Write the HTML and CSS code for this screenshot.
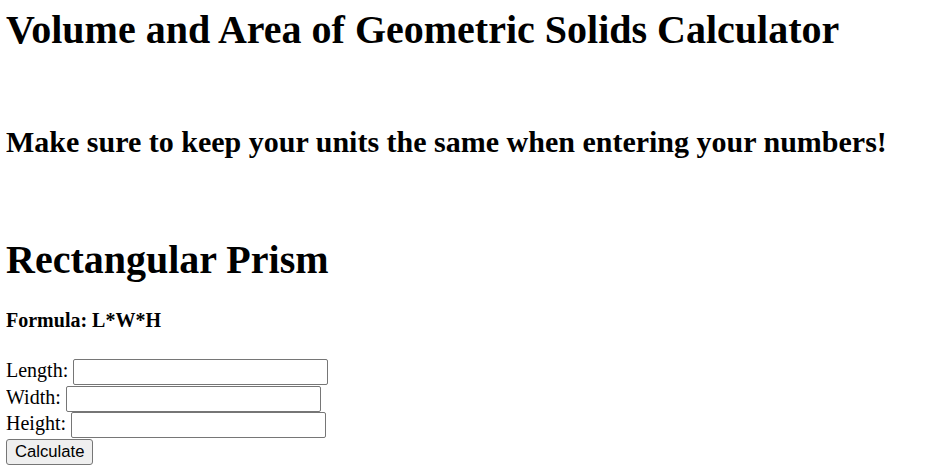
FILE: index.html
```html
<!DOCTYPE html>
<html>
<head>
<meta charset="utf-8">
<title>Volume and Area of Geometric Solids Calculator</title>
<link rel="stylesheet" href="styles.css">
</head>
<body>
<h1 class="title">Volume and Area of Geometric Solids Calculator</h1>
<h2 class="note">Make sure to keep your units the same when entering your numbers!</h2>
<h1 class="shape">Rectangular Prism</h1>
<h4 class="formula">Formula: L*W*H</h4>
<form class="calc">
  <div class="row"><label for="len">Length:</label> <input id="len" class="field" type="text"></div>
  <div class="row"><label for="wid">Width:</label> <input id="wid" class="field" type="text"></div>
  <div class="row"><label for="hei">Height:</label> <input id="hei" class="field" type="text"></div>
  <button type="button" class="btn">Calculate</button>
</form>
</body>
</html>
```
FILE: styles.css
```css
html, body {
  background: #ffffff;
}
body {
  margin: 6px 6px 0 6px;
  font-family: "Liberation Serif", "Times New Roman", serif;
  font-size: 20px;
  color: #000000;
}
.title {
  font-size: 40px;
  font-weight: bold;
  line-height: 46px;
  margin: 0.5px 0 72px 0;
}
.note {
  font-size: 30px;
  font-weight: bold;
  line-height: 34.5px;
  margin: 0 0 78.4px 0;
}
.shape {
  font-size: 40px;
  font-weight: bold;
  line-height: 46px;
  margin: 0 0 25.3px 0;
}
.formula {
  font-size: 20px;
  font-weight: bold;
  line-height: 23px;
  margin: 0 0 27.7px 0;
}
.calc {
  display: flex;
  flex-direction: column;
  align-items: flex-start;
}
.row {
  display: flex;
  align-items: baseline;
  gap: 5px;
  height: 26.5px;
  line-height: 23px;
}
.field {
  box-sizing: border-box;
  width: 255px;
  height: 26px;
  margin: 0;
  padding: 1px 3px;
  border: 1px solid #767676;
  border-radius: 2px;
  font-family: "Liberation Sans", Arial, sans-serif;
  font-size: 16.67px;
  background: #ffffff;
}
.btn {
  box-sizing: border-box;
  height: 26.5px;
  margin: 0;
  padding: 0 8px;
  border: 1px solid #767676;
  border-radius: 3px;
  background: #efefef;
  color: #000000;
  font-family: "Liberation Sans", Arial, sans-serif;
  font-size: 16.67px;
}
```
